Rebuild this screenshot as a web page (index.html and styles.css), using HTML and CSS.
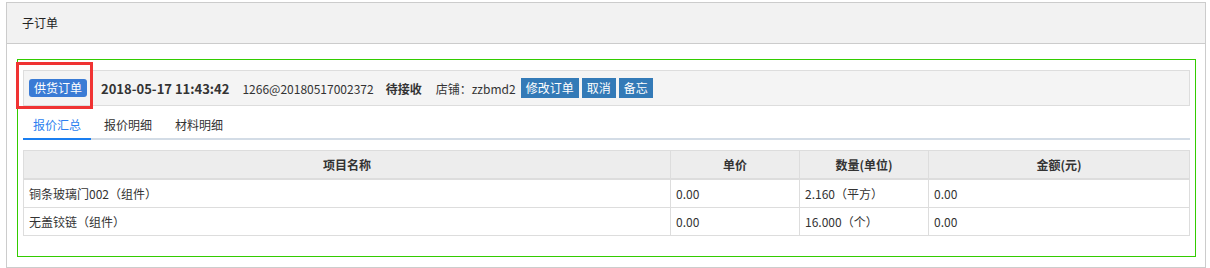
FILE: index.html
```html
<!DOCTYPE html>
<html lang="zh-CN">
<head>
    <meta charset="UTF-8">
    <title>子订单</title>
    <link rel="stylesheet" href="styles.css">
</head>
<body>

    <div class="panel">
        <div class="panel-heading">子订单</div>
        <div class="panel-body">
            <div class="order-box">
                <div class="order-bar">
                    <span class="order-type">供货订单</span>
                    <span class="order-time">2018-05-17 11:43:42</span>
                    <span class="order-no">1266@20180517002372</span>
                    <span class="order-status">待接收</span>
                    <span class="order-shop">店铺：zzbmd2</span>
                    <a class="btn">修改订单</a>
                    <a class="btn">取消</a>
                    <a class="btn">备忘</a>
                </div>

                <ul class="tabs">
                    <li class="active">报价汇总</li>
                    <li>报价明细</li>
                    <li>材料明细</li>
                </ul>

                <table class="quote-table">
                    <colgroup>
                        <col class="col-name">
                        <col class="col-price">
                        <col class="col-qty">
                        <col>
                    </colgroup>
                    <thead>
                        <tr>
                            <th>项目名称</th>
                            <th>单价</th>
                            <th>数量(单位)</th>
                            <th>金额(元)</th>
                        </tr>
                    </thead>
                    <tbody>
                        <tr>
                            <td>铜条玻璃门002（组件）</td>
                            <td>0.00</td>
                            <td>2.160（平方）</td>
                            <td>0.00</td>
                        </tr>
                        <tr>
                            <td>无盖铰链（组件）</td>
                            <td>0.00</td>
                            <td>16.000（个）</td>
                            <td>0.00</td>
                        </tr>
                    </tbody>
                </table>
            </div>
        </div>
    </div>

    <div class="mark"></div>

</body>
</html>
```

FILE: styles.css
```css
body {
    font-family: "Noto Sans CJK SC", "Liberation Sans", sans-serif;
    font-size: 12px;
    color: #333;
    margin: 0;
    padding: 2px 0 0 6px;
    background-color: #fff;
}

.panel {
    width: 1198px;
    border: 1px solid #ccc;
}

.panel-heading {
    height: 40px;
    line-height: 40px;
    padding: 0 15px;
    background-color: #f2f2f2;
    border-bottom: 1px solid #ccc;
    font-size: 12px;
    color: #222;
}

.panel-body {
    padding: 15px 9px 10px 10px;
}

.order-box {
    border: 1px solid #33cc00;
    padding: 10px 5px 20px 5px;
}

.order-bar {
    display: flex;
    align-items: center;
    height: 34px;
    padding: 0 5px;
    background-color: #f4f4f4;
    border: 1px solid #ddd;
}

.order-type {
    height: 18px;
    line-height: 18px;
    padding: 0 5px;
    margin-right: 14px;
    border-radius: 3px;
    background-color: #3a7bd5;
    color: #fff;
}

.order-time {
    font-size: 13px;
    font-weight: bold;
    margin-right: 13px;
}

.order-no {
    margin-right: 12px;
}

.order-status {
    font-weight: bold;
    margin-right: 14px;
}

.order-shop {
    margin-right: 5px;
}

.btn {
    height: 20px;
    line-height: 20px;
    padding: 0 5px;
    margin-right: 3px;
    background-color: #337ab7;
    color: #fff;
    cursor: pointer;
}

.tabs {
    display: flex;
    list-style: none;
    margin: 5px 0 0 0;
    padding: 0;
    border-bottom: 2px solid #d3dce6;
}

.tabs li {
    height: 27px;
    line-height: 27px;
    padding: 0 10px;
    margin-right: 3px;
    margin-bottom: -2px;
    border-bottom: 2px solid transparent;
    color: #333;
    cursor: pointer;
}

.tabs li.active {
    color: #2d7ff0;
    border-bottom-color: #1a7ef0;
}

.quote-table {
    width: 100%;
    margin-top: 10px;
    border-collapse: collapse;
}

.col-name {
    width: 647px;
}

.col-price,
.col-qty {
    width: 129px;
}

.quote-table th,
.quote-table td {
    height: 27px;
    line-height: 27px;
    padding: 0 5px;
    border: 1px solid #ddd;
}

.quote-table th {
    background-color: #ededed;
    border-bottom-width: 2px;
    font-weight: bold;
    text-align: center;
}

.quote-table td {
    text-align: left;
}

/* red highlight frame around the order type */
.mark {
    position: absolute;
    left: 16px;
    top: 62px;
    width: 71px;
    height: 41px;
    border: 3px solid #f03333;
}
```
